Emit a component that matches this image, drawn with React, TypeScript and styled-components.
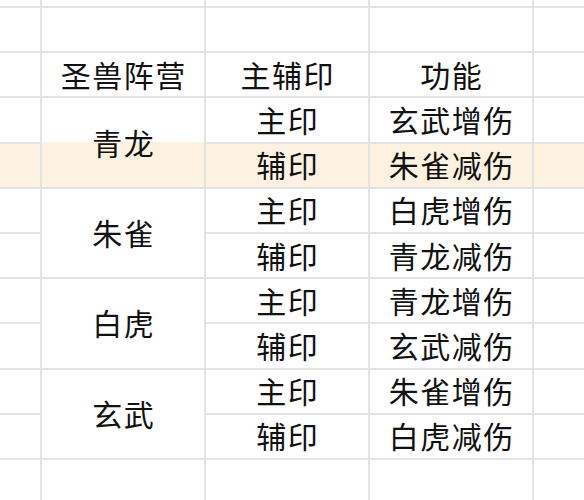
import React from 'react'
import styled, { createGlobalStyle } from 'styled-components'

const GlobalStyle = createGlobalStyle`
  html, body {
    margin: 0;
    padding: 0;
    background: #ffffff;
    overflow: hidden;
  }
`

const Sheet = styled.div`
  width: 584px;
  height: 500px;
  overflow: hidden;
  background: #e4e4e4;
  display: grid;
  grid-template-columns: 40px repeat(3, 162px) 60px;
  grid-template-rows: 6px repeat(10, 43.2px) 60px;
  gap: 2px;
  font-family: "Noto Sans CJK SC", "Microsoft YaHei", sans-serif;
  font-size: 30px;
  letter-spacing: 1.5px;
  color: #111111;
`

const Cell = styled.div<{ $hl?: boolean; $span?: number; $halfHl?: boolean }>`
  display: flex;
  align-items: center;
  justify-content: center;
  line-height: 1;
  padding: 0 0 2px 1.5px;
  background: ${(p) =>
    p.$halfHl
      ? 'linear-gradient(to bottom, #ffffff 0 50%, #fdf2e2 50% 100%)'
      : p.$hl
        ? '#fdf2e2'
        : '#ffffff'};
  ${(p) => (p.$span ? `grid-row: span ${p.$span};` : '')}
`

type Group = { camp: string; rows: [string, string][] }

const groups: Group[] = [
  { camp: '青龙', rows: [['主印', '玄武增伤'], ['辅印', '朱雀减伤']] },
  { camp: '朱雀', rows: [['主印', '白虎增伤'], ['辅印', '青龙减伤']] },
  { camp: '白虎', rows: [['主印', '青龙增伤'], ['辅印', '玄武减伤']] },
  { camp: '玄武', rows: [['主印', '朱雀增伤'], ['辅印', '白虎减伤']] },
]

// the row under the cursor in the sheet (青龙 / 辅印)
const HL_GROUP = 0
const HL_ROW = 1

const blankRow = (key: string) =>
  [0, 1, 2, 3, 4].map((i) => <Cell key={`${key}-${i}`} />)

export default function App() {
  return (
    <>
      <GlobalStyle />
      <Sheet>
        {blankRow('top')}
        {blankRow('empty')}

        <Cell />
        <Cell>圣兽阵营</Cell>
        <Cell>主辅印</Cell>
        <Cell>功能</Cell>
        <Cell />

        {groups.map((g, gi) =>
          g.rows.map(([kind, effect], ri) => {
            const hl = gi === HL_GROUP && ri === HL_ROW
            return (
              <React.Fragment key={`${g.camp}-${ri}`}>
                <Cell $hl={hl} />
                {ri === 0 && (
                  <Cell $span={2} $halfHl={gi === HL_GROUP}>
                    {g.camp}
                  </Cell>
                )}
                <Cell $hl={hl}>{kind}</Cell>
                <Cell $hl={hl}>{effect}</Cell>
                <Cell $hl={hl} />
              </React.Fragment>
            )
          })
        )}

        {blankRow('bottom')}
      </Sheet>
    </>
  )
}
